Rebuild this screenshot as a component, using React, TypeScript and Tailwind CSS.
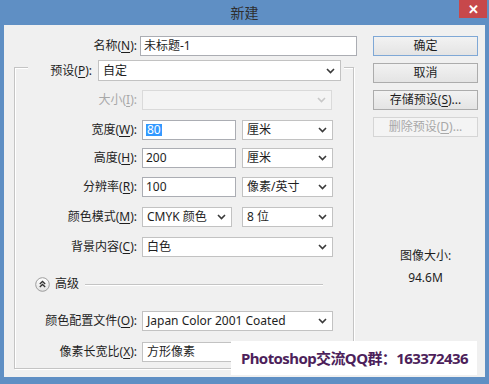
import React from "react";

const font = "font-['Noto_Sans','Noto_Sans_CJK_SC',sans-serif]";

function Chevron({ disabled }: { disabled?: boolean }) {
  return (
    <svg width="9" height="6" viewBox="0 0 9 6" className="shrink-0">
      <path
        d="M1 1 L4.5 4.5 L8 1"
        fill="none"
        stroke={disabled ? "#c8c8c8" : "#3a3a3a"}
        strokeWidth="1.6"
      />
    </svg>
  );
}

function Label({ text, hot, disabled }: { text: string; hot: string; disabled?: boolean }) {
  return (
    <span className={disabled ? "text-[#a8a8a8]" : "text-[#1e1e1e]"}>
      {text}(<span className="underline underline-offset-2">{hot}</span>):
    </span>
  );
}

function TextBox({ w, children }: { w: string; children?: React.ReactNode }) {
  return (
    <div className={`${w} h-[20px] bg-white border border-[#abadb3] flex items-center pl-[3px] text-[#1e1e1e]`}>
      {children}
    </div>
  );
}

function Select({ w, value, disabled }: { w: string; value?: string; disabled?: boolean }) {
  return (
    <div
      className={`${w} h-[20px] border flex items-center justify-between pl-[4px] pr-[5px] ${
        disabled ? "bg-[#f4f4f4] border-[#dadada]" : "bg-white border-[#c2c2c2] text-[#1e1e1e]"
      }`}
    >
      <span>{value}</span>
      <Chevron disabled={disabled} />
    </div>
  );
}

function Row({ label, children, className = "" }: { label: React.ReactNode; children: React.ReactNode; className?: string }) {
  return (
    <div className={`flex items-center h-[20px] ${className}`}>
      <div className="w-[122px] text-right">{label}</div>
      <div className="ml-[5px] flex gap-[6px]">{children}</div>
    </div>
  );
}

function Button({ children, primary, disabled, className = "" }: { children: React.ReactNode; primary?: boolean; disabled?: boolean; className?: string }) {
  return (
    <div
      className={`h-[20px] flex items-center justify-center border ${
        disabled
          ? "bg-[#f4f4f4] border-[#d5d5d5] text-[#a8a8a8]"
          : primary
          ? "bg-gradient-to-b from-[#f2f2f2] to-[#e4e4e4] border-[#7fa8d6] text-[#1e1e1e]"
          : "bg-gradient-to-b from-[#f2f2f2] to-[#e4e4e4] border-[#acacac] text-[#1e1e1e]"
      } ${className}`}
    >
      {children}
    </div>
  );
}

function AdvancedIcon() {
  return (
    <svg width="15" height="15" viewBox="0 0 15 15" className="shrink-0">
      <defs>
        <linearGradient id="adv" x1="0" y1="0" x2="0" y2="1">
          <stop offset="0" stopColor="#ffffff" />
          <stop offset="1" stopColor="#e2e2e2" />
        </linearGradient>
      </defs>
      <circle cx="7.5" cy="7.5" r="6.8" fill="url(#adv)" stroke="#9c9c9c" strokeWidth="1" />
      <path d="M4.8 7 L7.5 4.5 L10.2 7 M4.8 10 L7.5 7.5 L10.2 10" fill="none" stroke="#333" strokeWidth="1.3" />
    </svg>
  );
}

export default function App() {
  return (
    <div className={`relative w-[489px] h-[384px] bg-[#5f8fc4] flex flex-col text-[12px] leading-none ${font}`}>
      {/* Title bar */}
      <div className="relative h-[25px] flex items-center justify-center">
        <span className="text-[14px] text-[#2e2e2e]">新建</span>
        <div className="absolute right-[2px] top-0 w-[28px] h-[18px] bg-[#c7484b] flex items-center justify-center text-white text-[13px] font-bold">
          ✕
        </div>
      </div>

      {/* Client area */}
      <div className="ml-[4px] w-[481px] h-[352px] bg-[#f0f0f0] flex">
        {/* Left column */}
        <div className="w-[353px]">
          <div className="mt-[11px] flex items-center h-[20px]">
            <div className="w-[133px] text-right">
              <Label text="名称" hot="N" />
            </div>
            <div className="ml-[3px]">
              <TextBox w="w-[217px]">未标题-1</TextBox>
            </div>
          </div>

          <div className="ml-[10px] mt-[11px] w-[340px] border border-[#c4c4c4] shadow-[1px_1px_0_#ffffff,inset_1px_1px_0_#ffffff] pb-[6px]">
            {/* Preset row over the top border */}
            <div className="-mt-[8px] ml-[13px] mr-[9px] bg-[#f0f0f0] flex items-center h-[21px]">
              <div className="w-[64px] text-right">
                <Label text="预设" hot="P" />
              </div>
              <div className="ml-[6px]">
                <div className="w-[243px] h-[21px] bg-white border border-[#c2c2c2] flex items-center justify-between pl-[4px] pr-[5px] text-[#1e1e1e]">
                  <span>自定</span>
                  <Chevron />
                </div>
              </div>
            </div>

            <Row className="mt-[9px]" label={<Label text="大小" hot="I" disabled />}>
              <Select w="w-[190px]" disabled />
            </Row>
            <Row className="mt-[10px]" label={<Label text="宽度" hot="W" />}>
              <TextBox w="w-[94px]">
                <span className="bg-[#3399ff] text-white px-[1px]">80</span>
              </TextBox>
              <Select w="w-[91px]" value="厘米" />
            </Row>
            <Row className="mt-[8px]" label={<Label text="高度" hot="H" />}>
              <TextBox w="w-[94px]">200</TextBox>
              <Select w="w-[91px]" value="厘米" />
            </Row>
            <Row className="mt-[9px]" label={<Label text="分辨率" hot="R" />}>
              <TextBox w="w-[94px]">100</TextBox>
              <Select w="w-[91px]" value="像素/英寸" />
            </Row>
            <Row className="mt-[10px]" label={<Label text="颜色模式" hot="M" />}>
              <Select w="w-[90px]" value="CMYK 颜色" />
              <Select w="w-[91px] ml-[4px]" value="8 位" />
            </Row>
            <Row className="mt-[10px]" label={<Label text="背景内容" hot="C" />}>
              <Select w="w-[191px]" value="白色" />
            </Row>

            <div className="mt-[19px] ml-[20px] mr-[30px] flex items-center h-[16px]">
              <AdvancedIcon />
              <span className="ml-[5px] text-[#1e1e1e]">高级</span>
              <div className="ml-[6px] flex-1 border-t border-[#c4c4c4] shadow-[0_1px_0_#ffffff]" />
            </div>

            <Row className="mt-[19px]" label={<Label text="颜色配置文件" hot="O" />}>
              <Select w="w-[191px]" value="Japan Color 2001 Coated" />
            </Row>
            <Row className="mt-[11px]" label={<Label text="像素长宽比" hot="X" />}>
              <Select w="w-[191px]" value="方形像素" />
            </Row>
          </div>
        </div>

        {/* Right column */}
        <div className="ml-[16px] w-[105px] flex flex-col">
          <Button primary className="mt-[11px]">确定</Button>
          <Button className="mt-[7px]">取消</Button>
          <Button className="mt-[7px]">
            <span>
              存储预设(<span className="underline underline-offset-2">S</span>)...
            </span>
          </Button>
          <Button disabled className="mt-[7px]">
            <span>
              删除预设(<span className="underline underline-offset-2">D</span>)...
            </span>
          </Button>
          <div className="mt-[113px] text-center text-[#1e1e1e]">图像大小:</div>
          <div className="mt-[10px] text-center text-[#1e1e1e]">94.6M</div>
        </div>
      </div>

      {/* Watermark */}
      <div className="absolute left-[231px] top-[341px] w-[246px] h-[34px] bg-white flex items-center pl-[10px]">
        <span className="text-[15px] font-bold tracking-[-0.6px] text-[#4d1f5b] whitespace-nowrap">Photoshop交流QQ群：163372436</span>
      </div>
    </div>
  );
}
